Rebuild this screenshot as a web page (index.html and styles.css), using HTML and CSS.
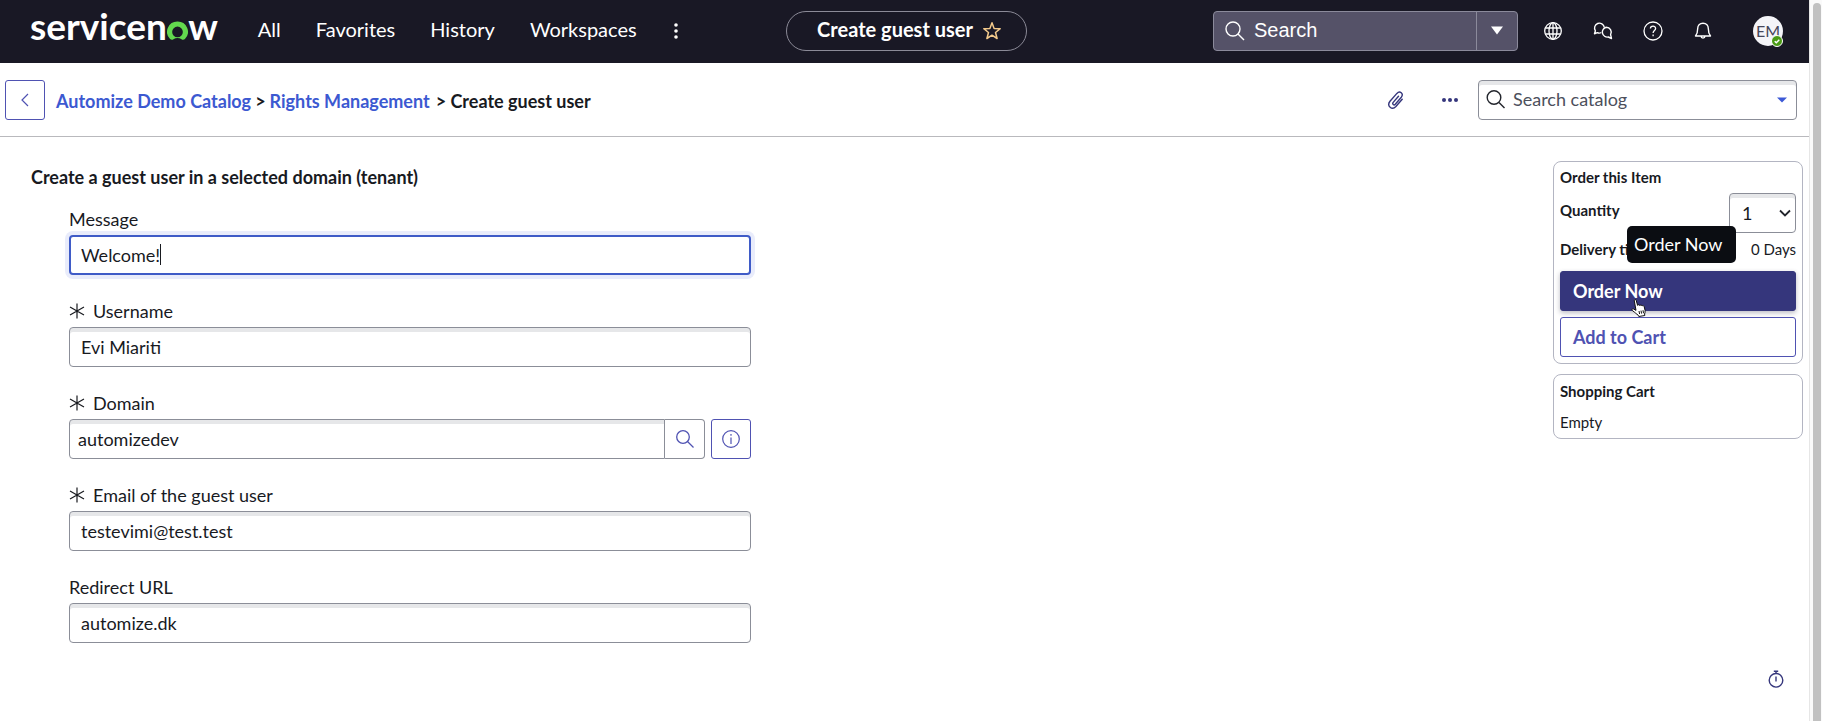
FILE: index.html
```html
<!DOCTYPE html>
<html lang="en">
<head>
<meta charset="utf-8">
<title>Create guest user</title>
<link rel="stylesheet" href="styles.css">
</head>
<body>
<div class="app">
  <header class="topbar">
    <div class="topbar-start">
      <a class="logo" href="#">servicen<span class="logo-o">o<svg width="21" height="20" viewBox="0 0 22 20" fill="#62d84e" fill-rule="evenodd"><path d="M11 0A10.800 10.800 0 0 0 3.200 18.400c1 1 2.500 1.100 3.600.3 2.500-1.800 5.900-1.800 8.400 0 1.100.8 2.600.7 3.600-.3A10.800 10.800 0 0 0 11 0zM11 16.600a5.600 5.600 0 1 1 0-11.200 5.600 5.600 0 0 1 0 11.200z"/></svg></span>w</a>
      <nav class="nav">
        <a href="#">All</a>
        <a href="#">Favorites</a>
        <a href="#">History</a>
        <a href="#">Workspaces</a>
      </nav>
      <button class="icon-btn kebab" aria-label="More menus">
        <svg width="6" height="18" viewBox="0 0 6 18" fill="currentColor"><circle cx="3" cy="3" r="1.800"/><circle cx="3" cy="9" r="1.800"/><circle cx="3" cy="15" r="1.800"/></svg>
      </button>
    </div>
    <button class="pill"><span>Create guest user</span>
      <svg width="20" height="20" viewBox="0 0 20 20" fill="none" stroke="#f3c98b" stroke-width="1.500" stroke-linejoin="round"><path d="M10 1.800l2.100 5.600 6.100.3-4.700 3.800 1.600 6-5.100-3.300-5.100 3.300 1.600-6L1.800 7.700l6.100-.3z"/></svg>
    </button>
    <div class="topbar-end">
      <div class="global-search">
        <svg width="22" height="22" viewBox="0 0 22 22" fill="none" stroke="currentColor" stroke-width="1.400"><circle cx="9" cy="9" r="7"/><path d="M14 14l6 6"/></svg>
        <input type="text" placeholder="Search" aria-label="Search">
        <button class="search-scope" aria-label="Search scope">
          <svg width="14" height="9" viewBox="0 0 14 9" fill="currentColor"><path d="M1 .5h12L7 8.500z"/></svg>
        </button>
      </div>
      <div class="tools">
        <button class="icon-btn" aria-label="Scope">
          <svg width="20" height="20" viewBox="0 0 20 20" fill="none" stroke="currentColor" stroke-width="1.300"><circle cx="10" cy="10" r="8.300"/><ellipse cx="10" cy="10" rx="4" ry="8.300"/><path d="M2.500 7h15M2.500 13h15M10 1.700v16.600"/></svg>
        </button>
        <button class="icon-btn" aria-label="Conversations">
          <svg width="20" height="20" viewBox="0 0 20 20" fill="none" stroke="currentColor" stroke-width="1.400" stroke-linejoin="round"><path d="M8.300 11.500c-1.200.7-2.700.8-4 .1L1.500 12.800l.9-3A4.900 4.900 0 1 1 11.300 6.300"/><path d="M13.300 6.300a4.900 4.900 0 0 1 4.300 7.300l.9 3.900-3.200-1.500A4.900 4.900 0 1 1 13.300 6.300z"/></svg>
        </button>
        <button class="icon-btn" aria-label="Help">
          <svg width="20" height="20" viewBox="0 0 20 20" fill="none" stroke="currentColor" stroke-width="1.300"><circle cx="10" cy="10" r="9"/><path d="M7.400 7.600C7.500 4.200 12.600 4.300 12.600 7.400c0 2-2.500 2.200-2.500 4.600"/><path d="M10.100 13.600v1.600"/></svg>
        </button>
        <button class="icon-btn" aria-label="Notifications">
          <svg width="20" height="20" viewBox="0 0 20 20" fill="none" stroke="currentColor" stroke-width="1.400" stroke-linejoin="round"><path d="M10 2.200c-3.400 0-5.300 2.400-5.300 5.300 0 3.600-.6 5.500-2.200 7.500h15c-1.600-2-2.200-3.900-2.200-7.500 0-2.900-1.900-5.300-5.300-5.300zM8 15.300c.2 2.400 3.800 2.400 4 0"/></svg>
        </button>
      </div>
      <button class="avatar" aria-label="EM, available">EM
        <svg class="presence" width="12" height="12" viewBox="0 0 12 12"><circle cx="6" cy="6" r="5.500" fill="#4a9b14" stroke="#fff"/><path d="M3.700 6.200l1.600 1.500 3-3" fill="none" stroke="#fff" stroke-width="1.500"/></svg>
      </button>
    </div>
  </header>

  <div class="crumbbar">
    <button class="square-btn" aria-label="Back">
      <svg width="10" height="14" viewBox="0 0 10 14" fill="none" stroke="currentColor" stroke-width="1.200"><path d="M8 1L2 7l6 6"/></svg>
    </button>
    <nav class="crumbs" aria-label="Breadcrumb">
      <a href="#">Automize Demo Catalog</a><span>&gt;</span><a href="#">Rights Management</a><span class="current">&gt; Create guest user</span>
    </nav>
    <div class="crumb-tools">
      <button class="icon-btn" aria-label="Attachments">
        <svg width="20" height="20" viewBox="0 0 20 20" fill="none" stroke="currentColor" stroke-width="1.400" stroke-linecap="round"><path d="M12.500 6.200l-5.300 6.200c-1.300 1.700.7 3.400 2.100 1.900l6-7.100c2.700-3.500-1.400-7-4.400-3.800L4 11.300c-3.600 4.600 2 9.400 5.900 5.200l6.300-7.300"/></svg>
      </button>
      <button class="icon-btn" aria-label="More options">
        <svg width="18" height="6" viewBox="0 0 18 6" fill="currentColor"><circle cx="3" cy="3" r="2"/><circle cx="9" cy="3" r="2"/><circle cx="15" cy="3" r="2"/></svg>
      </button>
    </div>
    <div class="catalog-search field-box">
      <svg width="22" height="22" viewBox="0 0 22 22" fill="none" stroke="#22252c" stroke-width="1.400"><circle cx="9" cy="8.500" r="6.800"/><path d="M14 13.500l5.500 5.500"/></svg>
      <input type="text" placeholder="Search catalog" aria-label="Search catalog">
      <svg width="12" height="6" viewBox="0 0 12 6" fill="#3c59d6"><path d="M1 .5h10L6 5.500z"/></svg>
    </div>
  </div>

  <main class="content">
    <form class="form">
      <h1>Create a guest user in a selected domain (tenant)</h1>
      <div class="field">
        <label for="message">Message</label>
        <div class="editing">
          <input class="field-box text focused" id="message" type="text" value="Welcome!">
          <span class="caret"></span>
        </div>
      </div>
      <div class="field">
        <label for="username"><svg class="req" width="16" height="16" viewBox="0 0 16 16" stroke="currentColor" stroke-width="1.200"><path d="M8 .5v15M1 4l14 8M15 4L1 12"/></svg>Username</label>
        <input class="field-box text" id="username" type="text" value="Evi Miariti">
      </div>
      <div class="field">
        <label for="domain"><svg class="req" width="16" height="16" viewBox="0 0 16 16" stroke="currentColor" stroke-width="1.200"><path d="M8 .5v15M1 4l14 8M15 4L1 12"/></svg>Domain</label>
        <div class="lookup">
          <input class="field-box text" id="domain" type="text" value="automizedev">
          <button class="square-btn lookup-btn" type="button" aria-label="Look up domain">
            <svg width="20" height="20" viewBox="0 0 20 20" fill="none" stroke="currentColor" stroke-width="1.300"><circle cx="8" cy="8" r="6.300"/><path d="M12.500 12.500l6 6"/></svg>
          </button>
          <button class="square-btn info-btn" type="button" aria-label="Preview record">
            <svg width="20" height="20" viewBox="0 0 20 20" fill="none" stroke="currentColor" stroke-width="1.200"><circle cx="10" cy="10" r="8.300"/><path d="M10 8.500V15M10 5v1.700"/></svg>
          </button>
        </div>
      </div>
      <div class="field">
        <label for="email"><svg class="req" width="16" height="16" viewBox="0 0 16 16" stroke="currentColor" stroke-width="1.200"><path d="M8 .5v15M1 4l14 8M15 4L1 12"/></svg>Email of the guest user</label>
        <input class="field-box text" id="email" type="text" value="testevimi@test.test">
      </div>
      <div class="field">
        <label for="redirect">Redirect URL</label>
        <input class="field-box text" id="redirect" type="text" value="automize.dk">
      </div>
    </form>

    <aside class="side">
      <section class="card">
        <h2>Order this Item</h2>
        <div class="row quantity">
          <label for="qty">Quantity</label>
          <div class="select-wrap">
            <select class="field-box" id="qty"><option>1</option><option>2</option><option>3</option></select>
            <svg width="12" height="8" viewBox="0 0 12 8" fill="none" stroke="#22252c" stroke-width="1.800"><path d="M1 1.500l5 5 5-5"/></svg>
          </div>
        </div>
        <div class="row"><b>Delivery time</b><span>0 Days</span></div>
        <div class="order">
          <button class="action primary">Order Now</button>
          <div class="tooltip" role="tooltip">Order Now</div>
          <svg class="pointer" width="16" height="18" viewBox="0 0 16 18" fill="#fff" stroke="#111" stroke-width="1" stroke-linejoin="round"><path d="M3.300 1.800C3 .3 4.900 0 5.200 1.400l1.400 5c.3-1 1.900-1 2.200.2.400-1 2-.9 2.200.4.700-.8 2-.4 2.200.6l.9 4c.3 1.500-.3 2.400-.5 3.400l.2 1.500-6 1-.6-1.300C5.400 15 4.300 13.700 1.300 11.500.3 10.500 1.500 9.300 2.700 10l2.300 1.400z"/><path d="M8 12l.6 3M10 11.600l.6 3M12 11.200l.5 3"/></svg>
        </div>
        <button class="action">Add to Cart</button>
      </section>
      <section class="card cart">
        <h2>Shopping Cart</h2>
        <p>Empty</p>
      </section>
    </aside>
  </main>

  <button class="icon-btn timer" aria-label="Response time">
    <svg width="18" height="18" viewBox="0 0 18 18" fill="none" stroke="currentColor" stroke-width="1.400"><circle cx="9" cy="10.300" r="6.800"/><path d="M9 6.500v5M6.800 1.200h4.400M9 1v2.500"/></svg>
  </button>
</div>
<div class="scrollbar"><div class="thumb"></div></div>
</body>
</html>
```

FILE: styles.css
```css
* { box-sizing: border-box; }

body {
  margin: 0;
  display: flex;
  min-height: 100vh;
  background: #fff;
  color: #181a1f;
  font: 18px/24px Lato, "Liberation Sans", sans-serif;
}

button, input, select { font: inherit; color: inherit; }
button { cursor: pointer; }
svg { flex: none; display: block; }
a { color: inherit; text-decoration: none; }
h1, h2, p { margin: 0; }

.app { flex: 1; min-width: 0; display: flex; flex-direction: column; }

.scrollbar {
  width: 13px;
  padding: 3px 1px 0 3px;
  border-left: 1px solid #e6e6e6;
  background: #fafafa;
  display: flex;
}
.thumb { flex: 1; border-radius: 4px 4px 0 0; background: #c1c1c1; }

.icon-btn {
  display: flex;
  padding: 0;
  border: 0;
  background: none;
}

/* Top bar */
.topbar {
  display: grid;
  grid-template-columns: 1fr auto 1fr;
  align-items: center;
  height: 63px;
  padding: 0 26px 2px 30px;
  background: #191825;
  color: #fff;
}
.topbar-start { display: flex; align-items: center; }
.logo { margin-right: 40px; padding-bottom: 9px; font-size: 37px; line-height: 48px; font-weight: 700; }
.logo-o { position: relative; color: transparent; }
.logo-o svg { position: absolute; left: 0; bottom: 7px; }
.nav { display: flex; gap: 35px; padding-bottom: 3px; font-size: 20px; }
.kebab { margin-left: 36px; }

.pill {
  display: flex;
  align-items: center;
  gap: 9px;
  height: 40px;
  padding: 0 24px 0 30px;
  border: 1px solid #8b8a97;
  border-radius: 20px;
  background: none;
  font-size: 20px;
  font-weight: 700;
}
.pill span { padding-bottom: 3px; }

.topbar-end { display: flex; align-items: center; justify-content: flex-end; }
.global-search {
  display: flex;
  align-items: center;
  width: 305px;
  height: 40px;
  padding-left: 10px;
  border: 1px solid #8b8a9b;
  border-radius: 4px;
  background: #555268;
}
.global-search input {
  flex: 1;
  min-width: 0;
  padding: 0 0 2px 8px;
  border: 0;
  background: none;
  font: 20px/24px "Liberation Sans", Arial, sans-serif;
}
.global-search input::placeholder { color: #fff; opacity: 1; }
.search-scope {
  display: flex;
  align-items: center;
  justify-content: center;
  width: 41px;
  height: 100%;
  padding: 0;
  border: 0;
  border-left: 1px solid #8b8a9b;
  background: none;
}
.tools { display: flex; gap: 30px; margin: 0 40px 0 25px; }
.avatar {
  position: relative;
  width: 30px;
  height: 30px;
  padding: 0;
  border: 0;
  border-radius: 50%;
  background: #f4f4f8;
  color: #45465a;
  font-size: 16px;
}
.presence { position: absolute; right: 0; bottom: -1px; }

/* Breadcrumb bar */
.crumbbar {
  display: flex;
  align-items: center;
  height: 74px;
  padding: 0 12px 0 5px;
  border-bottom: 1px solid #b9b9bd;
}
.square-btn {
  display: flex;
  align-items: center;
  justify-content: center;
  width: 40px;
  height: 40px;
  padding: 0;
  border: 1px solid #4f52b2;
  border-radius: 3px;
  background: #fff;
  color: #4f52b2;
}
.crumbs { flex: 1; display: flex; gap: 4px; margin-left: 11px; padding-top: 3px; font-weight: 700; }
.crumbs a { color: #3c59d1; }
.current { margin-left: 2px; }
.crumb-tools { display: flex; align-items: center; gap: 20px; margin-right: 11px; color: #35367c; }
.crumb-tools .icon-btn { width: 34px; justify-content: center; }

.field-box {
  border: 1px solid #8b8e98;
  border-radius: 4px;
  background: #fff;
  box-shadow: inset 0 4px 0 #e6e7e9;
}
.catalog-search {
  display: flex;
  align-items: center;
  width: 319px;
  height: 40px;
  padding: 0 8px 0 6px;
}
.catalog-search input {
  flex: 1;
  min-width: 0;
  padding: 0 0 2px 6px;
  border: 0;
  background: none;
}
.catalog-search input::placeholder { color: #4c505c; opacity: 1; }

/* Form */
.content {
  display: flex;
  justify-content: space-between;
  padding: 24px 6px 0 31px;
}
.form { width: 720px; display: flex; flex-direction: column; gap: 20px; }
h1 { font-size: 18px; line-height: 32px; margin-bottom: -10px; }
.field { margin-left: 38px; }
.field label { display: flex; align-items: center; height: 32px; }
.req { margin-right: 8px; }
.text { display: block; width: 100%; height: 40px; padding: 0 11px; outline: 0; }
.editing { position: relative; }
.focused {
  border: 2px solid #3f5bc7;
  padding: 0 10px;
  box-shadow: 0 0 0 4px #e9ecfb;
}
.caret { position: absolute; left: 91px; top: 9px; width: 1px; height: 21px; background: #181a1f; }
.lookup { display: flex; }
.lookup .text { flex: 1; min-width: 0; padding: 0 8px; border-radius: 4px 0 0 4px; }
.lookup-btn { border-color: #8b8e98; border-left: 0; border-radius: 0 4px 4px 0; }
.info-btn { margin-left: 6px; }

/* Order panel */
.side { width: 250px; display: flex; flex-direction: column; gap: 10px; font-size: 15px; line-height: 20px; }
.card {
  display: flex;
  flex-direction: column;
  padding: 5px 6px 6px;
  border: 1px solid #b3b5c2;
  border-radius: 8px;
}
.card h2 { font-size: 15px; line-height: 20px; }
.row { display: flex; justify-content: space-between; padding: 6px 0 12px; }
.quantity { padding: 6px 0 0; }
.quantity label { font-weight: 700; padding-top: 7px; }
.select-wrap { display: grid; align-items: center; }
.select-wrap > * { grid-area: 1 / 1; }
.select-wrap svg { justify-self: end; margin-right: 5px; pointer-events: none; }
.select-wrap select { width: 67px; height: 40px; padding: 0 12px; font-size: 18px; appearance: none; }
.action {
  width: 100%;
  height: 40px;
  padding: 0 12px;
  border: 1px solid #4f52b2;
  border-radius: 3px;
  background: #fff;
  color: #4f52b2;
  font-size: 18px;
  font-weight: 700;
  text-align: left;
}
.primary {
  border-color: #35367c;
  background: #35367c;
  color: #fff;
  box-shadow: 0 2px 5px rgba(30, 30, 60, .3);
}
.order { position: relative; margin-bottom: 6px; }
.tooltip {
  position: absolute;
  left: 67px;
  bottom: 48px;
  padding: 6px 14px 7px 7px;
  border-radius: 5px;
  background: #0b0d12;
  color: #fff;
  font-size: 18px;
  line-height: 24px;
  white-space: nowrap;
}
.pointer { position: absolute; left: 71px; bottom: -6px; }
.cart { gap: 11px; padding-top: 6px; }

.timer { margin: auto 24px 33px auto; color: #35367c; }
```
